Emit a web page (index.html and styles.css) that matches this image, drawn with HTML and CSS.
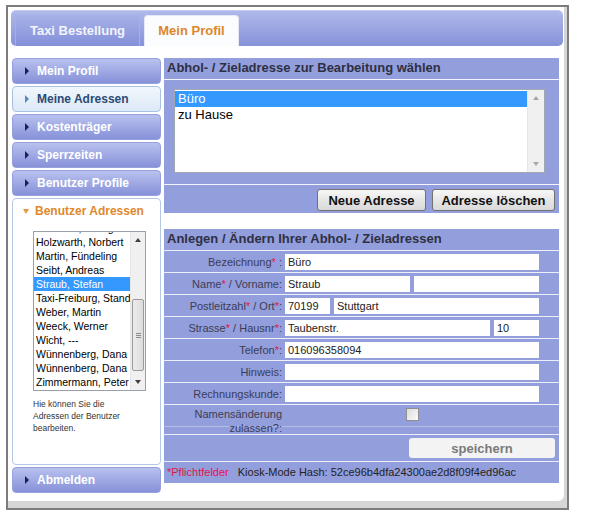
FILE: index.html
```html
<!DOCTYPE html>
<html lang="de">
<head>
<meta charset="utf-8">
<title>Mein Profil</title>
<link rel="stylesheet" href="styles.css">
</head>
<body>
<div class="frame">
  <div class="inner">
    <div class="tabbar">
      <div class="tab">Taxi Bestellung</div>
      <div class="tab active">Mein Profil</div>
    </div>
    <div class="content">
      <div class="sidebar">
        <div class="nav-item"><span class="tri"></span>Mein Profil</div>
        <div class="nav-item current"><span class="tri"></span>Meine Adressen</div>
        <div class="nav-item"><span class="tri"></span>Kostenträger</div>
        <div class="nav-item"><span class="tri"></span>Sperrzeiten</div>
        <div class="nav-item"><span class="tri"></span>Benutzer Profile</div>
        <div class="nav-panel">
          <div class="panel-head"><span class="tri-down"></span>Benutzer Adressen</div>
          <div class="userlist">
            <div class="userlist-items">
              <div class="userlist-scroll">
                <div class="opt">Hofmann, Georg</div>
                <div class="opt">Holzwarth, Norbert</div>
                <div class="opt">Martin, Fündeling</div>
                <div class="opt">Seibt, Andreas</div>
                <div class="opt sel">Straub, Stefan</div>
                <div class="opt">Taxi-Freiburg, Standard</div>
                <div class="opt">Weber, Martin</div>
                <div class="opt">Weeck, Werner</div>
                <div class="opt">Wicht, ---</div>
                <div class="opt">Wünnenberg, Dana</div>
                <div class="opt">Wünnenberg, Dana</div>
                <div class="opt">Zimmermann, Peter</div>
              </div>
            </div>
            <div class="vscroll small">
              <div class="arrow-box"><span class="arrow up"></span></div>
              <div class="track-gap top"></div>
              <div class="thumb"><span class="grip"></span></div>
              <div class="track-gap"></div>
              <div class="arrow-box"><span class="arrow down"></span></div>
            </div>
          </div>
          <p class="help">Hie können Sie die<br>Adressen der Benutzer<br>bearbeiten.</p>
        </div>
        <div class="nav-item"><span class="tri"></span>Abmelden</div>
      </div>

      <div class="main">
        <div class="box">
          <div class="box-head">Abhol- / Zieladresse zur Bearbeitung wählen</div>
          <div class="list-area">
            <div class="addrlist">
              <div class="addrlist-items">
                <div class="opt sel">Büro</div>
                <div class="opt">zu Hause</div>
              </div>
              <div class="vscroll disabled">
                <div class="arrow-box"><span class="arrow up"></span></div>
                <div class="track-gap"></div>
                <div class="arrow-box"><span class="arrow down"></span></div>
              </div>
            </div>
          </div>
          <div class="btn-row">
            <button class="btn btn-new">Neue Adresse</button>
            <button class="btn btn-del">Adresse löschen</button>
          </div>
        </div>

        <div class="box form">
          <div class="box-head">Anlegen / Ändern Ihrer Abhol- / Zieladressen</div>
          <div class="frow">
            <div class="lbl">Bezeichnung<span class="req">*</span> :</div>
            <div class="fields"><input class="inp w-full" value="Büro"></div>
          </div>
          <div class="frow">
            <div class="lbl">Name<span class="req">*</span> / Vorname:</div>
            <div class="fields"><input class="inp w-half" value="Straub"><input class="inp w-half" value=""></div>
          </div>
          <div class="frow">
            <div class="lbl">Postleitzahl<span class="req">*</span> / Ort<span class="req">*</span>:</div>
            <div class="fields"><input class="inp w-short" value="70199"><input class="inp w-long" value="Stuttgart"></div>
          </div>
          <div class="frow">
            <div class="lbl">Strasse<span class="req">*</span> / Hausnr<span class="req">*</span>:</div>
            <div class="fields"><input class="inp w-long" value="Taubenstr."><input class="inp w-short" value="10"></div>
          </div>
          <div class="frow">
            <div class="lbl">Telefon<span class="req">*</span>:</div>
            <div class="fields"><input class="inp w-full" value="016096358094"></div>
          </div>
          <div class="frow">
            <div class="lbl">Hinweis:</div>
            <div class="fields"><input class="inp w-full" value=""></div>
          </div>
          <div class="frow">
            <div class="lbl">Rechnungskunde:</div>
            <div class="fields"><input class="inp w-full" value=""></div>
          </div>
          <div class="frow top">
            <div class="lbl two">Namensänderung<br>zulassen?:</div>
            <div class="fields center"><input type="checkbox" class="chk"></div>
          </div>
          <div class="spacer-row"></div>
          <div class="save-row"><button class="save">speichern</button></div>
          <div class="foot"><span class="req">*Pflichtfelder</span><span class="hash">Kiosk-Mode Hash: 52ce96b4dfa24300ae2d8f09f4ed96ac</span></div>
        </div>
      </div>
    </div>
  </div>
</div>
</body>
</html>
```

FILE: styles.css
```css
* { box-sizing: border-box; }

body {
  margin: 0;
  background: #ffffff;
  font-family: "Liberation Sans", Arial, sans-serif;
  color: #222;
}

.frame {
  margin: 5px 0 0 6px;
  width: 563px;
  height: 505px;
  border: 2px solid #7c7c7c;
  background: #d5d7d7;
}

.inner {
  width: 556px;
  height: 494px;
  background: #ffffff;
  border-radius: 0 0 6px 0;
  padding-top: 3px;
}

/* tabs */
.tabbar {
  margin-left: 3px;
  width: 552px;
  height: 36px;
  padding: 5px 0 0 4px;
  display: flex;
  align-items: flex-end;
  gap: 4px;
  border-radius: 5px;
  background: linear-gradient(#b0b9ea, #8592d9);
  border-top: 1px solid #c4cbef;
}

.tab {
  width: 125px;
  height: 31px;
  line-height: 30px;
  text-align: center;
  font-weight: bold;
  font-size: 13px;
  color: #f3f4fc;
  border: 1px solid #a5aee6;
  border-bottom: 0;
  border-radius: 4px 4px 0 0;
  background: linear-gradient(#a6b0e7, #8390d9);
}

.tab.active {
  width: 95px;
  color: #db872c;
  background: #fafcfd;
  border-color: #e4e9f5;
}

/* layout */
.content {
  display: flex;
  gap: 3px;
  margin-top: 12px;
  padding-left: 4px;
}

.sidebar {
  width: 149px;
  display: flex;
  flex-direction: column;
}

.nav-item {
  height: 26px;
  margin-bottom: 2px;
  display: flex;
  align-items: center;
  border: 1px solid #95a0dd;
  border-radius: 4px;
  background: linear-gradient(#b9c1ee, #8691d9);
  color: #ffffff;
  font-weight: bold;
  font-size: 12px;
}

.tri {
  width: 0;
  height: 0;
  margin: 0 8px 0 12px;
  border-left: 4px solid #1b2150;
  border-top: 4px solid transparent;
  border-bottom: 4px solid transparent;
}

.nav-item.current {
  background: linear-gradient(#f1f7fc, #dde9f6);
  border-color: #a8c2e4;
  color: #2c4a76;
}

.nav-item.current .tri { border-left-color: #5d88be; }

.nav-panel {
  height: 267px;
  margin-bottom: 2px;
  border: 1px solid #b4c7e6;
  border-radius: 4px;
  background: #ffffff;
}

.panel-head {
  height: 24px;
  display: flex;
  align-items: center;
  color: #e0882b;
  font-weight: bold;
  font-size: 12px;
}

.tri-down {
  width: 0;
  height: 0;
  margin: 0 6px 0 10px;
  border-top: 5px solid #e59a3f;
  border-left: 3.5px solid transparent;
  border-right: 3.5px solid transparent;
}

/* user list box */
.userlist {
  margin: 8px 0 0 20px;
  width: 113px;
  height: 160px;
  border: 1px solid #9aa0a8;
  display: flex;
  background: #fff;
}

.userlist-items {
  flex: 1;
  overflow: hidden;
  font-size: 10.5px;
  line-height: 14px;
}

.userlist-scroll { margin-top: -11px; }

.opt {
  padding-left: 2px;
  white-space: nowrap;
  color: #000;
}

.opt.sel {
  background: #3399ff;
  color: #fff;
}

.vscroll {
  width: 17px;
  display: flex;
  flex-direction: column;
  background: #f0f0f0;
  border-left: 1px solid #e6e6e6;
}

.vscroll.small { width: 15px; }

.arrow-box {
  height: 16px;
  display: flex;
  align-items: center;
  justify-content: center;
}

.arrow {
  width: 0;
  height: 0;
  border-left: 3.5px solid transparent;
  border-right: 3.5px solid transparent;
}

.arrow.up { border-bottom: 4px solid #3f3f3f; }
.arrow.down { border-top: 4px solid #3f3f3f; }
.disabled .arrow.up { border-bottom-color: #a6a6a6; }
.disabled .arrow.down { border-top-color: #a6a6a6; }

.track-gap { flex: 1; }
.track-gap.top { flex: 0 0 51px; }

.thumb {
  height: 72px;
  margin: 0 1px;
  border: 1px solid #9a9a9a;
  border-radius: 2px;
  background: linear-gradient(90deg, #ececec, #dcdcdc);
  display: flex;
  align-items: center;
  justify-content: center;
}

.grip {
  width: 5px;
  height: 5px;
  border-top: 1px solid #8a8a8a;
  border-bottom: 1px solid #8a8a8a;
  background: linear-gradient(#8a8a8a, #8a8a8a) center / 5px 1px no-repeat;
}

.help {
  margin: 7px 0 0 20px;
  font-size: 8.5px;
  line-height: 12px;
  color: #333;
}

/* main */
.main {
  width: 395px;
  display: flex;
  flex-direction: column;
}

.box {
  background: #939edd;
}

.box.form { margin-top: 16px; }

.box-head {
  height: 21px;
  line-height: 20px;
  padding-left: 3px;
  font-weight: bold;
  font-size: 13px;
  color: #2e3042;
}

.list-area {
  height: 105px;
  border-top: 1px solid #f4f5fc;
  padding: 9px 0 0 10px;
}

.addrlist {
  width: 371px;
  height: 84px;
  border: 1px solid #a2a8b2;
  background: #fff;
  display: flex;
}

.addrlist-items {
  flex: 1;
  padding-top: 1px;
  font-size: 13px;
  line-height: 16px;
}

.addrlist-items .opt { padding-left: 3px; }

.btn-row {
  height: 29px;
  border-top: 1px solid #f4f5fc;
  display: flex;
  justify-content: flex-end;
  align-items: center;
  gap: 6px;
  padding: 2px 4px 0 0;
}

.btn {
  height: 22px;
  border: 1px solid #717171;
  border-radius: 3px;
  background: linear-gradient(#f8f8f8, #e6e6e6 50%, #d9d9d9);
  font-family: "Liberation Sans", Arial, sans-serif;
  font-weight: bold;
  font-size: 13px;
  color: #111;
  padding: 0;
}

.btn-new { width: 109px; }
.btn-del { width: 123px; }

/* form rows */
.frow {
  height: 22px;
  border-top: 1px solid #eceef9;
  display: grid;
  grid-template-columns: 118px 254px;
  column-gap: 3px;
  align-items: center;
}

.frow.top { align-items: start; }

.lbl {
  text-align: right;
  font-size: 11px;
  color: #3c3d52;
  white-space: nowrap;
}

.lbl.two {
  line-height: 14px;
  padding-top: 2px;
}

.req { color: #e2144c; }

.fields {
  display: flex;
  gap: 4px;
}

.fields.center {
  justify-content: center;
  padding-top: 3px;
}

.inp {
  height: 16px;
  border: 0;
  padding: 0 3px;
  background: #fff;
  font-family: "Liberation Sans", Arial, sans-serif;
  font-size: 11px;
  color: #222;
  outline: none;
}

.w-full { width: 254px; }
.w-half { width: 125px; }
.w-short { width: 45px; }
.w-long { width: 205px; }

.chk {
  appearance: none;
  -webkit-appearance: none;
  margin: 0;
  width: 13px;
  height: 13px;
  border: 1px solid #8e8f8f;
  background: linear-gradient(135deg, #dcdcdc, #fbfbfb);
}

.spacer-row {
  height: 8px;
  border-top: 1px solid #b3bbe8;
}

.save-row {
  height: 27px;
  border-top: 1px solid #eceef9;
  display: flex;
  justify-content: flex-end;
  align-items: center;
  padding-right: 4px;
}

.save {
  width: 146px;
  height: 20px;
  border: 0;
  border-radius: 3px;
  background: #f3f3f3;
  color: #7a7a7a;
  font-family: "Liberation Sans", Arial, sans-serif;
  font-weight: bold;
  font-size: 13px;
  padding: 0;
}

.foot {
  height: 22px;
  border-top: 1px solid #eceef9;
  padding-left: 3px;
  font-size: 11px;
  line-height: 20px;
  color: #222;
  white-space: nowrap;
}

.foot .hash { margin-left: 9px; }
```
